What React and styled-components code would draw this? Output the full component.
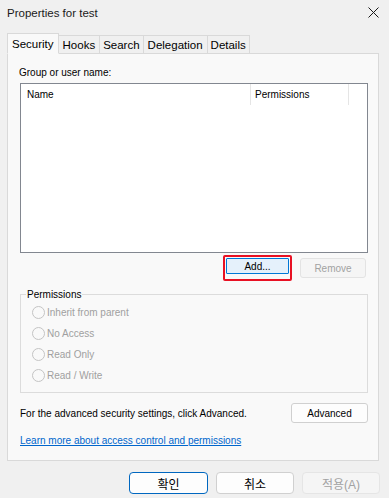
import React from 'react'
import styled, { createGlobalStyle } from 'styled-components'

const Global = createGlobalStyle`
  html, body {
    margin: 0;
    padding: 0;
    background: #f0f0f0;
  }
  body {
    font-family: "Liberation Sans", "Noto Sans CJK KR", sans-serif;
    color: #000;
  }
`

const Window = styled.div`
  width: 389px;
  height: 498px;
  background: #f0f0f0;
  box-sizing: border-box;
  display: flex;
  flex-direction: column;
  overflow: hidden;
`

const TitleBar = styled.div`
  height: 25px;
  display: flex;
  align-items: center;
  justify-content: space-between;
  padding: 0 8px 0 7px;
  font-size: 11.5px;
  color: #1a1a1a;
`

const Close = styled.svg`
  width: 11px;
  height: 11px;
  margin-right: 2px;
`

const Tabs = styled.div`
  display: flex;
  align-items: flex-end;
  margin: 8px 0 0 7px;
  height: 20px;
  position: relative;
  z-index: 1;
`

const Tab = styled.div`
  height: ${p => (p.$active ? '21px' : '18px')};
  padding: 0 ${p => p.$pad}px;
  box-sizing: border-box;
  display: flex;
  align-items: center;
  font-size: 11.5px;
  color: #000;
  background: ${p => (p.$active ? '#f9f9f9' : '#f0f0f0')};
  border: 1px solid #d9d9d9;
  border-bottom: ${p => (p.$active ? '1px solid #f9f9f9' : 'none')};
  margin-left: ${p => (p.$active ? '0' : '-1px')};
  margin-bottom: ${p => (p.$active ? '-1px' : '0')};
`

const Panel = styled.div`
  margin: 0 10px 0 7px;
  height: 408px;
  box-sizing: border-box;
  background: #f9f9f9;
  border: 1px solid #d9d9d9;
  padding: 12px 10px 0 12px;
  display: flex;
  flex-direction: column;
  font-size: 10px;
`

const Label = styled.div`
  line-height: 14px;
  margin-left: -1px;
`

const ListBox = styled.div`
  margin-top: 3px;
  height: 170px;
  box-sizing: border-box;
  background: #fff;
  border: 1px solid #828790;
`

const ListHeader = styled.div`
  display: grid;
  grid-template-columns: 230px 98px 1fr;
  height: 21px;
`

const HeaderCell = styled.div`
  display: flex;
  align-items: center;
  padding-left: ${p => p.$pad || 6}px;
  border-right: ${p => (p.$sep ? '1px solid #e5e5e5' : 'none')};
`

const ButtonRow = styled.div`
  display: flex;
  justify-content: flex-end;
  gap: 8px;
  margin-top: 5px;
  padding-right: 2px;
`

const Focus = styled.div`
  border: 2px solid #e81123;
  border-radius: 2px;
  padding: 1px;
  margin: -3px 0;
  display: flex;
`

const Button = styled.div`
  width: ${p => p.$w}px;
  height: ${p => p.$h || 20}px;
  box-sizing: border-box;
  display: flex;
  align-items: center;
  justify-content: center;
  font-size: ${p => p.$size || 10}px;
  border-radius: ${p => p.$r || 3}px;
  border: 1px solid ${p => p.$border || '#d0d0d0'};
  background: ${p => p.$bg || '#fdfdfd'};
  color: ${p => (p.$disabled ? '#a2a2a2' : '#000')};
`

const Group = styled.fieldset`
  margin: 10px 0 0 0;
  padding: 3px 0 6px 11px;
  border: 1px solid #dcdcdc;
  height: 105px;
  box-sizing: border-box;
  display: flex;
  flex-direction: column;
  gap: 5px;
`

const Legend = styled.legend`
  padding: 0 1px;
  margin-left: -6px;
  line-height: 13px;
  font-size: 10px;
`

const Radio = styled.div`
  display: flex;
  align-items: center;
  gap: 2px;
  height: 16px;
  color: #a0a0a0;
`

const Circle = styled.span`
  width: 11px;
  height: 11px;
  border-radius: 50%;
  border: 1px solid #c4c4c4;
  background: #f9f9f9;
`

const AdvRow = styled.div`
  display: flex;
  justify-content: space-between;
  align-items: center;
  margin-top: 10px;
`

const Link = styled.a`
  margin-top: 11px;
  color: #0066cc;
  text-decoration: underline;
  line-height: 14px;
`

const Footer = styled.div`
  display: flex;
  justify-content: flex-end;
  gap: 8px;
  padding: 11px 9px 0 0;
`

export default function App() {
  return (
    <>
      <Global />
      <Window>
        <TitleBar>
          <span>Properties for test</span>
          <Close viewBox="0 0 11 11">
            <path d="M0.5 0.5 L10.5 10.5 M10.5 0.5 L0.5 10.5" stroke="#1a1a1a" strokeWidth="1" fill="none" />
          </Close>
        </TitleBar>
        <Tabs>
          <Tab $active $pad={4}>Security</Tab>
          <Tab $pad={4}>Hooks</Tab>
          <Tab $pad={3}>Search</Tab>
          <Tab $pad={4}>Delegation</Tab>
          <Tab $pad={3}>Details</Tab>
        </Tabs>
        <Panel>
          <Label>Group or user name:</Label>
          <ListBox>
            <ListHeader>
              <HeaderCell $sep>Name</HeaderCell>
              <HeaderCell $sep $pad={4}>Permissions</HeaderCell>
              <HeaderCell />
            </ListHeader>
          </ListBox>
          <ButtonRow>
            <Focus>
              <Button $w={63} $h={16} $bg="#e5f1fb" $border="#0078d7" $r={1}>Add...</Button>
            </Focus>
            <Button $w={66} $disabled $bg="#f5f5f5" $border="#e3e3e3">Remove</Button>
          </ButtonRow>
          <Group>
            <Legend>Permissions</Legend>
            <Radio><Circle />Inherit from parent</Radio>
            <Radio><Circle />No Access</Radio>
            <Radio><Circle />Read Only</Radio>
            <Radio><Circle />Read / Write</Radio>
          </Group>
          <AdvRow>
            <span>For the advanced security settings, click Advanced.</span>
            <Button $w={77}>Advanced</Button>
          </AdvRow>
          <Link>Learn more about access control and permissions</Link>
        </Panel>
        <Footer>
          <Button $w={79} $h={22} $size={12} $border="#0067c0" $r={4} $bg="#fdfdfd">확인</Button>
          <Button $w={78} $h={22} $size={12} $r={4}>취소</Button>
          <Button $w={78} $h={22} $size={12} $r={4} $disabled $bg="#f5f5f5" $border="#e5e5e5">적용(A)</Button>
        </Footer>
      </Window>
    </>
  )
}
